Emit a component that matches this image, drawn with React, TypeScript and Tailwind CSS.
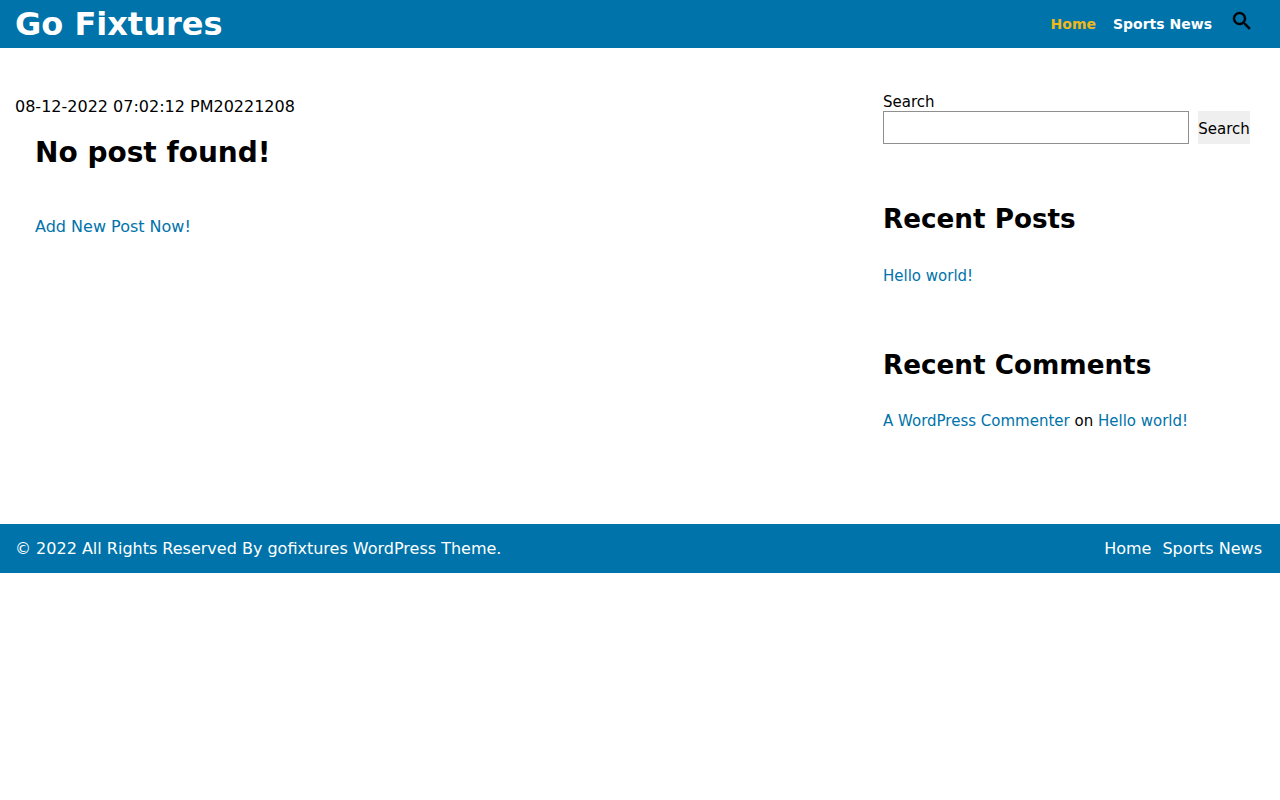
export default function App() {
  return (
    <div className="font-['DejaVu_Sans',sans-serif] text-black bg-white">
      <header className="h-12 bg-[#0073aa] flex items-center justify-between pl-[15px] pr-[20px]">
        <a className="text-[32px] font-bold text-white leading-none">Go Fixtures</a>
        <nav className="flex items-center">
          <a className="text-[14px] font-bold text-[#eeb919] mr-[17px]">Home</a>
          <a className="text-[14px] font-bold text-white mr-[18px]">Sports News</a>
          <svg width="24" height="24" viewBox="0 0 24 24" className="mb-[6px] mr-[6px]" fill="#000" stroke="#000" strokeWidth="0.4"><path d="M15.5 14h-.79l-.28-.27A6.47 6.47 0 0 0 16 9.5 6.5 6.5 0 1 0 9.5 16c1.61 0 3.09-.59 4.23-1.57l.27.28v.79l5 4.99L20.49 19l-4.99-5zm-6 0C7.01 14 5 11.99 5 9.5S7.01 5 9.5 5 14 7.01 14 9.5 11.99 14 9.5 14z"/></svg>
        </nav>
      </header>
      <div className="flex h-[476px]">
        <main className="w-[868px] pl-[15px] pt-[47px]">
          <p className="text-[16px] leading-[24px] h-[24px]">08-12-2022 07:02:12 PM20221208</p>
          <div className="pl-[20px]">
            <h1 className="text-[28px] font-bold leading-[34px] mt-[17px]">No post found!</h1>
            <a className="block text-[16px] text-[#0073aa] mt-[45px] leading-[24px]">Add New Post Now!</a>
          </div>
        </main>
        <aside className="w-[367px] ml-[15px] pt-[45px]">
          <label className="block text-[15px] leading-[18px]">Search</label>
          <div className="flex">
            <input className="w-[306px] h-[33px] border border-[#8f8f8f] bg-white" />
            <button className="ml-[9px] w-[52px] h-[33px] pt-[4px] bg-[#efefef] text-[15px] text-black">Search</button>
          </div>
          <h2 className="text-[26.24px] font-bold leading-[30px] mt-[60px]">Recent Posts</h2>
          <a className="block text-[15px] text-[#0073aa] mt-[30px] leading-[24px]">Hello world!</a>
          <h2 className="text-[26.24px] font-bold leading-[30px] mt-[62px]">Recent Comments</h2>
          <p className="text-[15px] mt-[29px] leading-[24px]"><a className="text-[#0073aa]">A WordPress Commenter</a> on <a className="text-[#0073aa]">Hello world!</a></p>
        </aside>
      </div>
      <footer className="h-[49px] bg-[#0073aa] flex items-center justify-between pl-[15px] pr-[18px] text-white text-[16px]">
        <p>© 2022 All Rights Reserved By gofixtures WordPress Theme.</p>
        <nav className="flex gap-[11px]"><a>Home</a><a>Sports News</a></nav>
      </footer>
    </div>
  );
}
